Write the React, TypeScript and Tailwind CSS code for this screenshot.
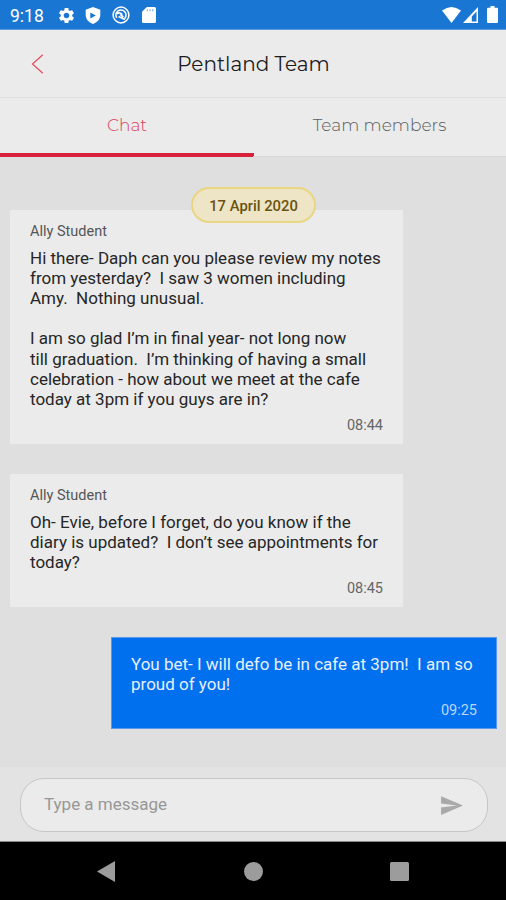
import { MdSend, MdSettings } from "react-icons/md";

const messages = [
  {
    sender: "Ally Student",
    time: "08:44",
    lines: [
      "Hi there- Daph can you please review my notes",
      "from yesterday?  I saw 3 women including",
      "Amy.  Nothing unusual.",
      "",
      "I am so glad I’m in final year- not long now",
      "till graduation.  I’m thinking of having a small",
      "celebration - how about we meet at the cafe",
      "today at 3pm if you guys are in?",
    ],
  },
  {
    sender: "Ally Student",
    time: "08:45",
    lines: [
      "Oh- Evie, before I forget, do you know if the",
      "diary is updated?  I don’t see appointments for",
      "today?",
    ],
  },
];

const StatusBar = () => (
  <div className="h-[30px] shrink-0 bg-[#1976d2] text-white flex items-center justify-between pl-[10px] pr-[8px] border-b border-b-[#5b9ade]">
    <div className="flex items-center">
      <span className="w-[38px] text-[17.5px] leading-[30px] mt-[2px] mr-[9px] whitespace-nowrap">
        9:18
      </span>
      <MdSettings className="w-[19px] h-[19px] mr-[9px] mt-px" />
      <svg className="w-[16px] h-[17px] mr-[11px] mt-px" viewBox="0 0 16 17">
        <path
          fill="currentColor"
          fillRule="evenodd"
          d="M8 0 15.300 2.800V8c0 4-3 7.400-7.300 9C3.700 15.400.7 12 .7 8V2.800ZM5.300 5.500v6L10.800 8.500Z"
        />
      </svg>
      <svg
        className="w-[18px] h-[18px] mr-[12px] mt-px"
        viewBox="0 0 18 18"
        fill="none"
        stroke="currentColor"
      >
        <circle cx="9" cy="9" r="7.900" strokeWidth="1.500" />
        <path
          strokeWidth="1.700"
          d="M4.800 11.800A5 5 0 1 1 12.800 12.200M5 7.800c2-1.400 4.300-1 5.200.8M6.600 10.400l6.400 3.200M8.200 8.400l3.200 2.600"
        />
      </svg>
      <svg className="w-[14px] h-[16px] mt-px" viewBox="0 0 14 16">
        <path
          fill="currentColor"
          d="M4.800 0H12.500Q14 0 14 1.500V14.500Q14 16 12.500 16H1.500Q0 16 0 14.500V4.800Z"
        />
        <path
          stroke="#1976d2"
          strokeOpacity="0.600"
          strokeWidth="1.100"
          d="M5.300 2.300V4.300M8 2.300V4.300M10.700 2.300V4.300"
        />
      </svg>
    </div>
    <div className="flex items-center">
      <svg className="w-[19px] h-[16px] mr-[2px]" viewBox="0 0 19 16">
        <path fill="currentColor" d="M0 3.600Q9.500-3.400 19 3.600L9.500 16Z" />
      </svg>
      <svg className="w-[15px] h-[16px] mr-[9px]" viewBox="0 0 15 16">
        <path
          fill="currentColor"
          fillRule="evenodd"
          d="M15 0V16H0ZM13.500 4.500 8.800 9.500V14.500H13.500Z"
        />
      </svg>
      <svg className="w-[11px] h-[17px]" viewBox="0 0 11 17">
        <path
          fill="currentColor"
          d="M3.500 0h4v1.700H10q1 0 1 1V16q0 1-1 1H1q-1 0-1-1V2.700q0-1 1-1h2.500Z"
        />
      </svg>
    </div>
  </div>
);

const Header = () => (
  <div className="h-[68px] shrink-0 bg-[#ebebeb] border-b border-b-[#dedede] grid grid-cols-[60px_1fr_60px] items-center">
    <button className="pl-[31px]">
      <svg
        className="w-[13px] h-[20px]"
        viewBox="0 0 13 20"
        fill="none"
        stroke="#e0525f"
        strokeWidth="1.300"
      >
        <path d="M11.800.7 1.500 10l10.300 9.300" />
      </svg>
    </button>
    <h1 className="font-[Montserrat,Inter,sans-serif] text-center text-[20px] pt-px pl-px text-[#1c1c1c]">
      Pentland Team
    </h1>
  </div>
);

const Tabs = () => (
  <div className="h-[59px] shrink-0 bg-[#ebebeb] grid grid-cols-2 font-[Montserrat,Inter,sans-serif] font-light text-[17px]">
    <button className="border-b-4 border-b-[#d8213b] text-[#dc4258] w-[254px]">
      Chat
    </button>
    <button className="border-b border-b-[#d9d9d9] pb-[3px] text-[#5c5d60]">
      Team members
    </button>
  </div>
);

const Lines = ({ lines }: { lines: string[] }) => (
  <div className="text-[17px] leading-[20.150px] whitespace-pre">
    {lines.map((line, index) => (
      <div key={index} className="h-[20.150px]">
        {line}
      </div>
    ))}
  </div>
);

const NavBar = () => (
  <div className="h-[58px] shrink-0 bg-black text-[#9c9c9c] grid grid-cols-[212px_83px_1fr] items-center">
    <svg className="w-[18px] h-[21px] ml-[97px]" viewBox="0 0 18 21">
      <path fill="currentColor" d="M18 0V21L0 10.500Z" />
    </svg>
    <div className="size-[19px] rounded-full bg-[#9c9c9c] ml-[32px]" />
    <div className="size-[19px] rounded-[1.500px] bg-[#9c9c9c] ml-[95px]" />
  </div>
);

export default function App() {
  return (
    <div className="w-[506px] h-[900px] flex flex-col overflow-hidden bg-[#dfdfdf] font-[Roboto,sans-serif]">
      <StatusBar />
      <Header />
      <Tabs />
      <div className="relative flex-1 pt-[53px] pl-[10px] pr-[9px] flex flex-col gap-[30px]">
        <div className="absolute left-[191px] top-[30px] w-[125px] h-[36px] rounded-full border-2 border-[#ead583] bg-[#ede5c6] flex items-center justify-center pt-[2px] text-[14.800px] font-medium text-[#6b5310]">
          17 April 2020
        </div>
        {messages.map((item, index) => (
          <div
            key={index}
            className="w-[393px] bg-[#ebebeb] pl-[20px] pr-[20px] pt-[13px] pb-[8.700px] text-[#262626]"
          >
            <div className="text-[14.500px] leading-[18px] mb-[6.800px] text-[#555]">
              {item.sender}
            </div>
            <Lines lines={item.lines} />
            <div className="text-right text-[14.500px] leading-[18px] mt-[8.100px] text-[#666]">
              {item.time}
            </div>
          </div>
        ))}
        <div className="self-end w-[386px] h-[92px] bg-[#0070ef] border border-[#5c97ee] pl-[19px] pr-[19px] pt-[16px] text-[#e6efff]">
          <Lines
            lines={["You bet- I will defo be in cafe at 3pm!  I am so", "proud of you!"]}
          />
          <div className="text-right text-[14.500px] leading-[18px] mt-[8px] text-[#bcd6fb]">
            09:25
          </div>
        </div>
      </div>
      <div className="h-[75px] shrink-0 bg-[#e3e3e3] pt-[11px] pl-[20px] pr-[18px] border-b border-b-[#8a8a8a]">
        <div className="h-[54px] rounded-[24px] border border-[#c6c6c6] bg-[#ebebeb] flex items-center justify-between pl-[23px] pr-[23px]">
          <span className="text-[17px] text-[#979797]">Type a message</span>
          <MdSend className="w-[25px] h-[25px] text-[#a9a9a9]" />
        </div>
      </div>
      <NavBar />
    </div>
  );
}
